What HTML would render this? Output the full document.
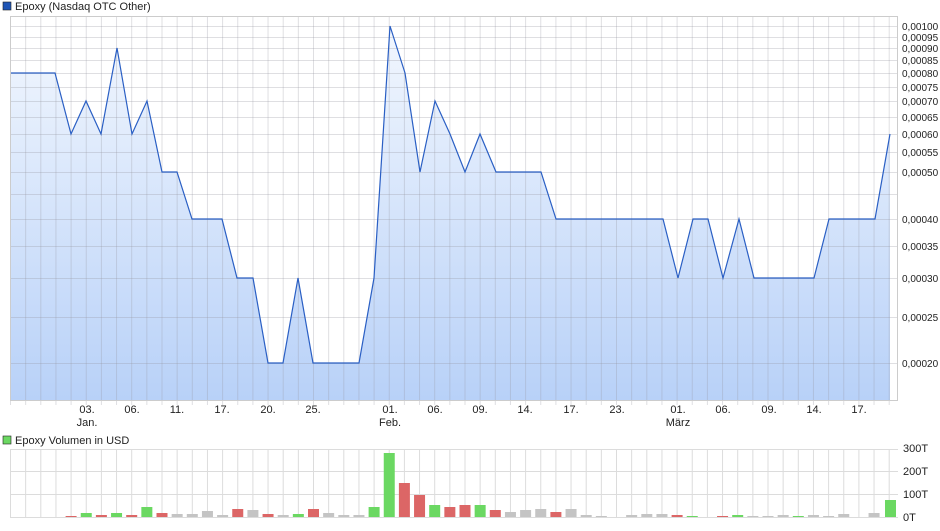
<!DOCTYPE html>
<html><head><meta charset="utf-8"><style>
body{margin:0;background:#fff;width:940px;height:526px;overflow:hidden;font-family:"Liberation Sans",sans-serif}
svg text{font-family:"Liberation Sans",sans-serif;font-size:11px;fill:#222}
#ylab text{font-size:10px}
</style></head><body>
<svg width="940" height="526" xmlns="http://www.w3.org/2000/svg">
<defs><linearGradient id="g" x1="0" y1="0" x2="0" y2="1"><stop offset="0" stop-color="#f2f7fe"/><stop offset="1" stop-color="#b8d1f8"/></linearGradient></defs>
<rect x="3" y="2" width="8" height="8" fill="#1f55b5" stroke="#222" stroke-width="0.6"/>
<text x="15" y="10">Epoxy (Nasdaq OTC Other)</text>
<polygon id="area" fill="url(#g)"></polygon>
<g id="grid" stroke="rgba(150,150,160,0.3)" stroke-width="1"></g>
<polyline id="line" fill="none" stroke="#2a5fc4" stroke-width="1.2"></polyline>
<rect x="10.5" y="16.5" width="887" height="384" fill="none" stroke="#ccc"/>
<g id="ylab"></g>
<g id="xlab"></g>
<rect x="3" y="436" width="8" height="8" fill="#6bd862" stroke="#222" stroke-width="0.6"/>
<text x="15" y="444">Epoxy Volumen in USD</text>
<g id="vgrid" stroke="#dcdcdc"></g>
<g id="bars"></g>
<text x="903" y="452">300T</text><text x="903" y="475">200T</text><text x="903" y="498">100T</text><text x="903" y="521">0T</text>
</svg>
<script>
var ns="http://www.w3.org/2000/svg";
function el(p,t,a,txt){var e=document.createElementNS(ns,t);for(var k in a)e.setAttribute(k,a[k]);if(txt)e.textContent=txt;document.getElementById(p).appendChild(e);return e;}
var step=15.15;
for(var i=0;i<=58;i++){var x=10.5+i*step;if(x>898)break;el("grid","line",{x1:x,y1:16,x2:x,y2:405});el("vgrid","line",{x1:x,y1:449,x2:x,y2:517});}
var ys=[[26,"0,00100"],[37,"0,00095"],[48,"0,00090"],[60,"0,00085"],[73,"0,00080"],[87,"0,00075"],[101,"0,00070"],[117,"0,00065"],[134,"0,00060"],[152,"0,00055"],[172,"0,00050"],[194,""],[219,"0,00040"],[246,"0,00035"],[278,"0,00030"],[317,"0,00025"],[363,"0,00020"]];
ys.forEach(function(y){el("grid","line",{x1:10,y1:y[0]+.5,x2:898,y2:y[0]+.5});if(y[1])el("ylab","text",{x:902,y:y[0]+4},y[1]);});
[449,471,494,517].forEach(function(y){el("vgrid","line",{x1:10,y1:y+.5,x2:898,y2:y+.5});});
var pts=[[10,73],[55,73],[71,134],[86,101],[101,134],[117,48],[132,134],[147,101],[162,172],[177,172],[192,219],[222,219],[237,278],[253,278],[268,363],[283,363],[298,278],[313,363],[359,363],[374,278],[390,26],[405,73],[420,172],[435,101],[450,134],[465,172],[480,134],[496,172],[541,172],[556,219],[663,219],[678,278],[693,219],[708,219],[723,278],[739,219],[754,278],[814,278],[829,219],[875,219],[890,134]];
var s=pts.map(function(p){return p.join(",")}).join(" ");
document.getElementById("line").setAttribute("points",s);
document.getElementById("area").setAttribute("points","10,400 "+s+" 890,400");
var xl=[[87,"03."],[132,"06."],[177,"11."],[222,"17."],[268,"20."],[313,"25."],[390,"01."],[435,"06."],[480,"09."],[525,"14."],[571,"17."],[617,"23."],[678,"01."],[723,"06."],[769,"09."],[814,"14."],[859,"17."]];
xl.forEach(function(a){el("xlab","text",{x:a[0],y:413,"text-anchor":"middle"},a[1]);});
el("xlab","text",{x:87,y:426,"text-anchor":"middle"},"Jan.");
el("xlab","text",{x:390,y:426,"text-anchor":"middle"},"Feb.");
el("xlab","text",{x:678,y:426,"text-anchor":"middle"},"März");
var G="#6bd862",R="#dc6666",Y="#c4c4c4";
var b=[[4,R,1],[5,G,4],[6,R,2],[7,G,4],[8,R,2],[9,G,10],[10,R,4],[11,Y,3],[12,Y,3],[13,Y,6],[14,Y,2],[15,R,8],[16,Y,7],[17,R,3],[18,Y,2],[19,G,3],[20,R,8],[21,Y,4],[22,Y,2],[23,Y,2],[24,G,10],[25,G,64],[26,R,34],[27,R,22],[28,G,12],[29,R,10],[30,R,12],[31,G,12],[32,R,7],[33,Y,5],[34,Y,7],[35,Y,8],[36,R,5],[37,Y,8],[38,Y,2],[39,Y,1],[41,Y,2],[42,Y,3],[43,Y,3],[44,R,2],[45,G,1],[47,R,1],[48,G,2],[49,Y,1],[50,Y,1],[51,Y,2],[52,G,1],[53,Y,2],[54,Y,1],[55,Y,3],[57,Y,4],[58,G,17]];
b.forEach(function(a){var x=10.5+a[0]*step-5.5;if(a[0]==58)x=885;el("bars","rect",{x:x,y:517-a[2],width:11,height:a[2],fill:a[1]});});
</script>
</body></html>
